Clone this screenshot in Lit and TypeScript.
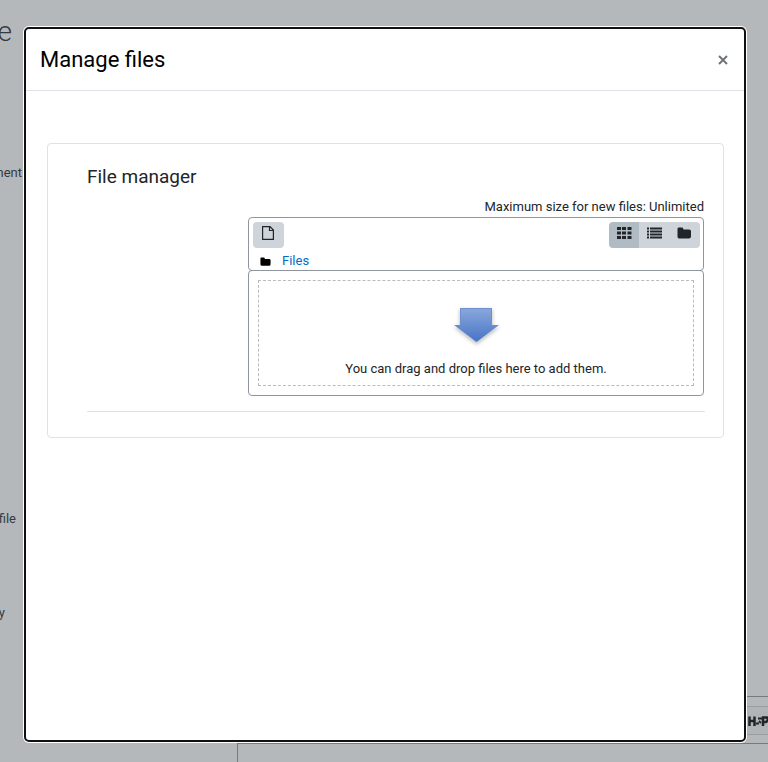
import { LitElement, html, css, svg } from "lit";
import { customElement, state } from "lit/decorators.js";

const folder = svg`<path d="M1.5 0.5H5Q6 .5 6.2 1.5L6.5 2.5H12Q14 2.5 14 4V9.5Q14 11.500 12 11.500H2Q.5 11.500 .5 9.800V2Q.5 .5 1.500 .5Z"/>`;

@customElement("app-root")
export class AppRoot extends LitElement {
  static styles = css`
    :host { display: block; position: relative; height: 100vh; overflow: hidden; background: #b4b8bb; color: #212529; font: 13px/20px Roboto, sans-serif; }
    * { box-sizing: border-box; }
    h1, h2, h3, p, fieldset { margin: 0; padding: 0; }
    button { border: 0; padding: 0; font: inherit; color: inherit; cursor: pointer; }
    svg { display: block; }
    .page { display: grid; grid-template-columns: 237px 1fr; height: 100%; color: #343a40; }
    .labels { display: flex; flex-direction: column; align-items: flex-start; }
    .labels p { display: flex; justify-content: flex-end; white-space: nowrap; }
    .labels .heading { width: 12px; font-size: 28px; font-weight: 300; line-height: 32px; margin: 16px 0 115px; }
    .labels .wide { width: 22px; margin-bottom: 326px; }
    .labels .mid { width: 16px; margin-bottom: 74px; }
    .labels .slim { width: 5px; }
    .editor { display: flex; flex-direction: column; padding-top: 696px; height: 100%; }
    .tools { height: 48px; flex: none; border-top: 1px solid #747a80; border-bottom: 1px solid #747a80; padding: 9px 0 8px; }
    .row { display: flex; align-items: center; justify-content: flex-end; height: 29px; border-top: 1px solid #999da0; border-bottom: 1px solid #999da0; background: #b0b4b7; }
    .area { flex: 1; border-left: 1px solid #747a80; }
    .layer { position: absolute; inset: 0; display: flex; padding: 27px 22px 20px 24px; }
    .dialog { flex: 1; min-width: 0; border: 2px solid #101010; border-radius: 5px; box-shadow: 0 0 0 1px #fff; background: #fff; }
    .head { display: flex; align-items: center; justify-content: space-between; height: 62px; padding: 0 14px; border-bottom: 1px solid #dee2e6; }
    .head h2 { font-size: 22px; font-weight: 400; line-height: 28px; color: #000; }
    .close { background: none; width: 14px; height: 20px; color: #6f7478; }
    .close svg { margin: 0 auto; }
    .body { padding: 52px 20px 0 21px; }
    fieldset { border: 1px solid #dee2e6; border-radius: 4px; padding: 20px 18px 25px 39px; min-width: 0; }
    h3 { font-size: 19px; font-weight: 400; line-height: 26px; margin-bottom: 7px; }
    .manager { margin-left: 161px; padding-right: 1px; }
    .limit { text-align: right; }
    .bar { height: 54px; border: 1px solid #8f959e; border-radius: 4px; padding: 4px 3px 0 4px; }
    .buttons { display: flex; justify-content: space-between; height: 26px; }
    .add { width: 31px; background: #ced4da; border-radius: 4px; }
    .add svg { margin: 0 9px 4px; }
    .views { display: flex; border-radius: 4px; overflow: hidden; }
    .views button { width: 30px; background: #ced4da; }
    .views button:last-child { width: 31px; }
    .views .on { background: #b1bbc4; }
    .views svg { margin: 0 auto 4px; }
    .path { display: flex; align-items: center; gap: 11px; padding: 3px 0 0 7px; color: #000; }
    a { color: #0070c4; text-decoration: none; }
    .content { height: 126px; margin-top: -1px; border: 1px solid #8f959e; border-radius: 4px; padding: 9px; }
    .drop { height: 100%; border: 1px dashed #bbb; display: flex; flex-direction: column; align-items: center; padding-top: 24px; }
    .drop p { margin-top: 8px; }
    .rule { border-top: 1px solid #dee2e6; margin-top: 15px; }
  `;

  @state() view = 0;

  render() {
    const icons = [
      svg`<path d="M0 0h4v3h-4zM5 0h4v3h-4zM10.500 0h4v3h-4zM0 4.500h4v3h-4zM5 4.500h4v3h-4zM10.500 4.500h4v3h-4zM0 9h4v3h-4zM5 9h4v3h-4zM10.500 9h4v3h-4z"/>`,
      svg`<path d="M0 .5h2v2h-2zM3 .5h12v2h-12zM0 3.500h2v2h-2zM3 3.500h12v2h-12zM0 6.500h2v2h-2zM3 6.500h12v2h-12zM0 9.500h2v2h-2zM3 9.500h12v2h-12z"/>`,
      folder,
    ];
    const names = ["Display as icons", "Display as list", "Display as folders"];
    return html`
      <div class="page">
        <div class="labels">
          <p class="heading">e</p><p class="wide">ment</p><p class="mid">file</p><p class="slim">y</p>
        </div>
        <div class="editor">
          <div class="tools"><div class="row">
            <svg width="20" height="12" viewBox="0 0 20 12" fill="none" stroke="#212529" stroke-width="2.500"><path d="M1.500 1.500V11M1.500 6H6.500M6.500 1.500V11"/><path d="M8 8.500H11M10 3.500H14M11 6L13 8" stroke-width="1.800"/><path d="M15 1.500V11M14 2.500H19Q21 5 18 7H14"/></svg>
          </div></div>
          <div class="area"></div>
        </div>
      </div>
      <div class="layer">
        <section class="dialog" role="dialog" aria-modal="true" aria-labelledby="title">
          <header class="head"><h2 id="title">Manage files</h2><button class="close" aria-label="Close"><svg width="10" height="10" viewBox="0 0 10 10" fill="none" stroke="currentColor" stroke-width="2"><path d="M1 1L9 9M9 1L1 9"/></svg></button></header>
          <div class="body">
            <fieldset>
              <h3>File manager</h3>
              <div class="manager">
                <p class="limit">Maximum size for new files: Unlimited</p>
                <div class="bar">
                  <div class="buttons">
                    <button class="add" aria-label="Add file"><svg width="12" height="14" viewBox="0 0 12 14" fill="none" stroke="#212529" stroke-width="1.200"><path d="M.6 .6H8L11.400 4V13.400H.6ZM7.500 .6V4.500H11.400"/></svg></button>
                    <div class="views">
                      ${icons.map((icon, i) => html`<button class=${this.view === i ? "on" : ""} aria-label=${names[i]} @click=${() => (this.view = i)}><svg width="15" height="12" viewBox="0 0 15 12" fill="#212529">${icon}</svg></button>`)}
                    </div>
                  </div>
                  <div class="path"><svg width="11" height="9" viewBox="0 0 14.500 12">${folder}</svg><a href="#">Files</a></div>
                </div>
                <div class="content"><div class="drop">
                  <svg width="50" height="46" viewBox="0 0 50 46">
                    <defs>
                      <linearGradient id="blue" x1="0" y1="0" x2="0" y2="1"><stop offset="0" stop-color="#8ba8dc"/><stop offset="1" stop-color="#4774c6"/></linearGradient>
                      <filter id="shade" x="-20%" y="-20%" width="140%" height="150%"><feDropShadow dx="0" dy="2" stdDeviation="2" flood-opacity=".3"/></filter>
                    </defs>
                    <path d="M9 3H41V20H48L25.500 37L3 20H9Z" fill="url(#blue)" filter="url(#shade)"/>
                    <path d="M9.500 20V3.500H40.500V20" fill="none" stroke="#6d8fd0"/>
                  </svg>
                  <p>You can drag and drop files here to add them.</p>
                </div></div>
              </div>
              <div class="rule"></div>
            </fieldset>
          </div>
        </section>
      </div>`;
  }
}
